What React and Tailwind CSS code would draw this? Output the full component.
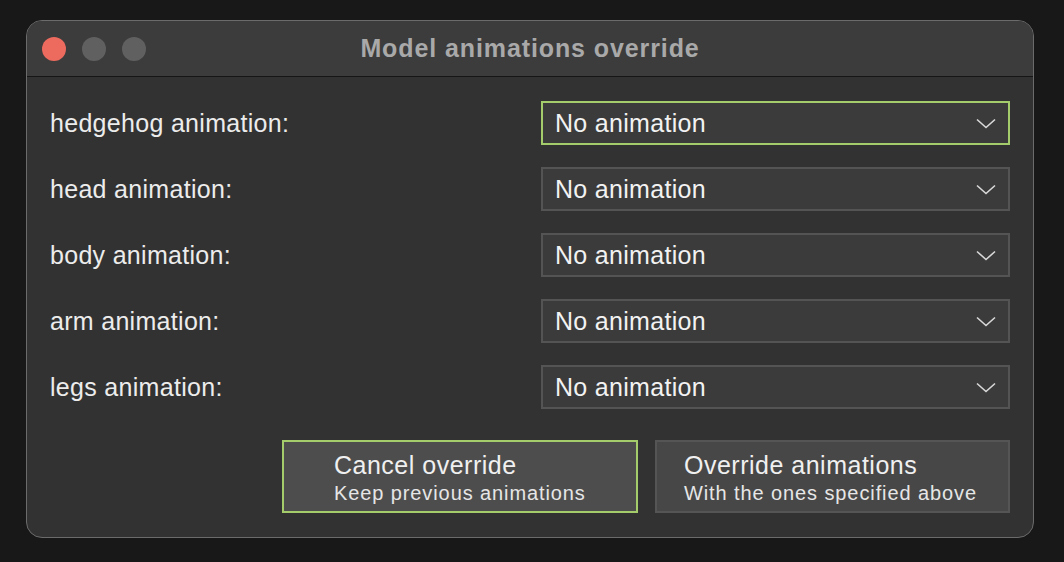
import React from "react";

const rows = ["hedgehog animation:", "head animation:", "body animation:", "arm animation:", "legs animation:"];

function Chevron() {
  return (
    <svg width="20" height="11" viewBox="0 0 20 11" fill="none">
      <path d="M1 1.5 L10 9.5 L19 1.5" stroke="#d8d8d8" strokeWidth="1.6" />
    </svg>
  );
}

export default function App() {
  return (
    <div className="w-[1064px] h-[562px] bg-[#181818] flex pl-[26px] pt-[20px]" style={{ fontFamily: '"Liberation Sans", Arial, sans-serif' }}>
      <div className="w-[1008px] h-[518px] rounded-[16px] border border-[#6b6b6b] bg-[#323232] overflow-hidden flex flex-col">
        <div className="h-[56px] bg-[#3c3c3c] border-b border-[#161616] flex items-center relative shrink-0">
          <div className="flex gap-[16px] pl-[15px]">
            <div className="w-[24px] h-[24px] rounded-full bg-[#ec6a5e]" />
            <div className="w-[24px] h-[24px] rounded-full bg-[#606060]" />
            <div className="w-[24px] h-[24px] rounded-full bg-[#606060]" />
          </div>
          <div className="absolute inset-0 flex items-center justify-center text-[25px] tracking-[0.9px] font-bold text-[#a9a9a9]">
            Model animations override
          </div>
        </div>
        <div className="flex flex-col pt-[24px] pl-[23px] pr-[23px]">
          <div className="flex flex-col gap-[22px]">
            {rows.map((r, i) => (
              <div key={r} className="flex items-center h-[44px]">
                <div className="flex-1 text-[25px] tracking-[0.3px] text-[#ececec] pt-[1px]">{r}</div>
                <div className={`w-[469px] h-[44px] bg-[#3b3b3b] border-2 flex items-center justify-between pl-[12px] pr-[12px] ${i === 0 ? "border-[#a4cc6a]" : "border-[#545454]"}`}>
                  <span className="text-[25px] tracking-[0.3px] text-[#f2f2f2] pt-[1px]">No animation</span>
                  <Chevron />
                </div>
              </div>
            ))}
          </div>
          <div className="flex justify-end gap-[17px] mt-[31px]">
            <div className="w-[356px] h-[73px] bg-[#4d4d4d] border-2 border-[#a4cc6a] flex flex-col justify-center pl-[50px] pt-[4px]">
              <div className="text-[25px] tracking-[0.5px] text-[#f0f0f0] leading-[29px]">Cancel override</div>
              <div className="text-[20px] tracking-[0.9px] text-[#e6e6e6] leading-[27px]">Keep previous animations</div>
            </div>
            <div className="w-[355px] h-[73px] bg-[#474747] border-2 border-[#555555] flex flex-col justify-center pl-[27px] pt-[4px]">
              <div className="text-[25px] tracking-[0.5px] text-[#f0f0f0] leading-[29px]">Override animations</div>
              <div className="text-[20px] tracking-[0.9px] text-[#e6e6e6] leading-[27px]">With the ones specified above</div>
            </div>
          </div>
        </div>
      </div>
    </div>
  );
}
